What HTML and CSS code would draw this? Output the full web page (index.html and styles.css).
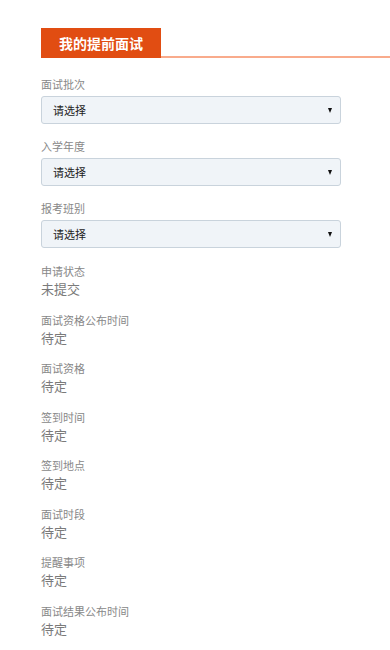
FILE: index.html
```html
<!DOCTYPE html>
<html>
<head>
  <title>我的提前面试</title>
  <meta name="viewport" content="width=device-width, initial-scale=1">
  <link rel="stylesheet" href="styles.css">
</head>
<body>
  <div id="page">
    <!-- Title tab -->
    <div class="title-bar">
      <div class="title-tab">我的提前面试</div>
      <div class="title-line"></div>
    </div>

    <!-- Selects -->
    <div class="field">
      <div class="label">面试批次</div>
      <div class="select"><span>请选择</span><span class="arrow"></span></div>
    </div>
    <div class="field">
      <div class="label">入学年度</div>
      <div class="select"><span>请选择</span><span class="arrow"></span></div>
    </div>
    <div class="field">
      <div class="label">报考班别</div>
      <div class="select"><span>请选择</span><span class="arrow"></span></div>
    </div>

    <!-- Status info -->
    <div class="info-list">
      <div class="info"><div class="label">申请状态</div><div class="value">未提交</div></div>
      <div class="info"><div class="label">面试资格公布时间</div><div class="value">待定</div></div>
      <div class="info"><div class="label">面试资格</div><div class="value">待定</div></div>
      <div class="info"><div class="label">签到时间</div><div class="value">待定</div></div>
      <div class="info"><div class="label">签到地点</div><div class="value">待定</div></div>
      <div class="info"><div class="label">面试时段</div><div class="value">待定</div></div>
      <div class="info"><div class="label">提醒事项</div><div class="value">待定</div></div>
      <div class="info"><div class="label">面试结果公布时间</div><div class="value">待定</div></div>
    </div>
  </div>
</body>
</html>
```

FILE: styles.css
```css
/* Base */
html, body {
  margin: 0;
  padding: 0;
  background: #fff;
  font-family: "Noto Sans CJK SC", "Liberation Sans", sans-serif;
  color: #333;
}
#page {
  padding: 28px 0 0 41px;
}
/* Title */
.title-bar {
  display: flex;
  align-items: flex-end;
  margin-bottom: 18px;
}
.title-tab {
  width: 120px;
  height: 30px;
  line-height: 30px;
  background: #e14d12;
  color: #fff;
  font-size: 14px;
  font-weight: bold;
  text-align: center;
}
.title-line {
  flex: 1;
  height: 2px;
  background: #f9ab8c;
}
/* Labels */
.label {
  font-size: 11px;
  line-height: 16px;
  color: #888;
}
/* Select fields */
.field {
  width: 300px;
  margin-bottom: 14px;
}
.field .label {
  margin-bottom: 4px;
}
.select {
  height: 28px;
  box-sizing: border-box;
  border: 1px solid #c9d3dc;
  border-radius: 3px;
  background: #f0f4f8;
  display: flex;
  justify-content: space-between;
  align-items: center;
  padding: 0 8px 0 11px;
  font-size: 11px;
  color: #222;
}
.arrow {
  width: 0;
  height: 0;
  border-left: 2.5px solid transparent;
  border-right: 2.5px solid transparent;
  border-top: 5px solid #111;
}
/* Info rows */
.info-list {
  padding-top: 1px;
}
.info {
  margin-bottom: 12.5px;
}
.value {
  font-size: 13px;
  line-height: 20px;
  color: #7a7a7a;
}
```
